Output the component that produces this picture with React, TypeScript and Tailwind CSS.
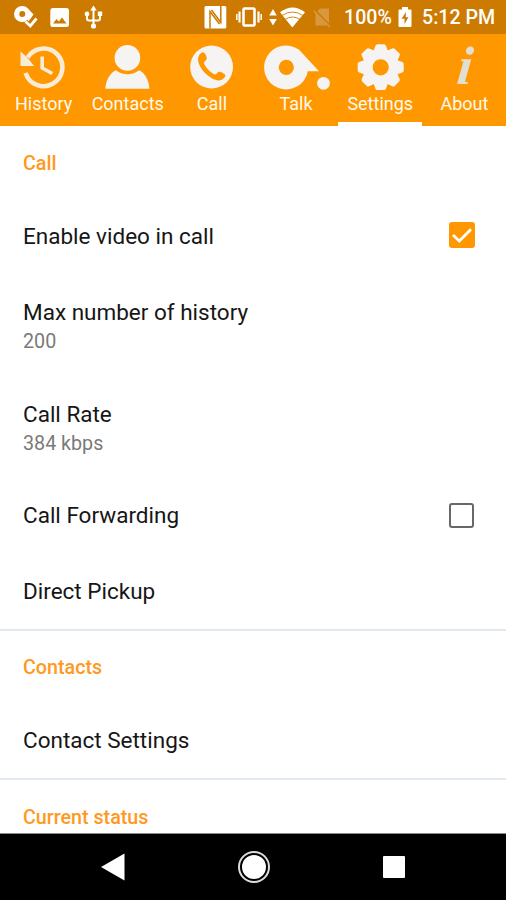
import type { ReactNode } from 'react'

type Tab = {
  label: string
  icon: ReactNode
}

type Pref = {
  title: string
  summary?: string
  checked?: boolean
}

type Section = {
  name: string
  items: Pref[]
}

const tabs: Tab[] = [
  { label: 'History', icon: <HistoryIcon /> },
  { label: 'Contacts', icon: <ContactsIcon /> },
  { label: 'Call', icon: <CallIcon /> },
  { label: 'Talk', icon: <TalkIcon /> },
  { label: 'Settings', icon: <GearIcon /> },
  { label: 'About', icon: <AboutIcon /> },
]

const sections: Section[] = [
  {
    name: 'Call',
    items: [
      { title: 'Enable video in call', checked: true },
      { title: 'Max number of history', summary: '200' },
      { title: 'Call Rate', summary: '384 kbps' },
      { title: 'Call Forwarding', checked: false },
      { title: 'Direct Pickup' },
    ],
  },
  { name: 'Contacts', items: [{ title: 'Contact Settings' }] },
  { name: 'Current status', items: [] },
]

function HistoryIcon() {
  return (
    <svg viewBox="1 0 84 56" className="w-[84px] h-14" fill="none" stroke="#f8ecd8">
      <path d="M25.6 38.8A18.8 18.8 0 1 0 27.6 23.5" strokeWidth="4.6" />
      <path d="M20.5 17.5L25.5 22L29 25.5L34 32H20.5Z" fill="#f8ecd8" stroke="none" />
      <path d="M42.2 22.5V34L52.3 39.5" strokeWidth="3.6" />
    </svg>
  )
}

function ContactsIcon() {
  return (
    <svg viewBox="1 0 84 56" className="w-[84px] h-14" fill="#f5f4f2">
      <circle cx="43.4" cy="23.9" r="12.8" />
      <path d="M21.3 54.7C21.8 46 26.5 38.5 32 36.3C38.5 41.5 48.5 41.5 55 36.3C60.5 38.5 65 46 65.4 54.7Z" />
    </svg>
  )
}

function CallIcon() {
  return (
    <svg viewBox="0 0 84 56" className="w-[84px] h-14">
      <circle cx="42.6" cy="33" r="21.4" fill="#f5f4f2" />
      <path
        transform="translate(25.4 16.2) scale(1.42)"
        d="M4.6 2.1C6.3 0.8 7.2 1.6 8.1 3.6C9 5.6 9 6.6 7.6 7.6C6.4 8.5 6.6 9.2 7.6 11C9 13.3 10.7 15 13 16.4C14.5 17.3 15.3 17.3 16.1 16.1C17 14.9 18 14.9 20 16C22 17 22.4 17.9 21.2 19.3C19 21.9 16 21.8 12.3 19.8C8.6 17.8 5.5 14.5 3.8 11C2.1 7.4 2.1 4 4.6 2.1Z"
        fill="#ff9800"
      />
    </svg>
  )
}

function TalkIcon() {
  return (
    <svg viewBox="1 0 84 56" className="w-[84px] h-14" fill="#f5f4f2">
      <path
        fillRule="evenodd"
        d="M46.1 15.7L66 37.2H54.8A22 22 0 1 1 46.1 15.7ZM33.3 25.7A7.6 7.6 0 1 0 33.3 40.9A7.6 7.6 0 1 0 33.3 25.7Z"
      />
      <circle cx="70.5" cy="49.3" r="6.4" />
    </svg>
  )
}

function GearIcon() {
  const angles = [0, 45, 90, 135, 180, 225, 270, 315]
  return (
    <svg viewBox="0 0 84 56" className="w-[84px] h-14" fill="#f5f4f2">
      <g transform="translate(42.7 33.3)">
        <circle r="13.1" fill="none" stroke="#f5f4f2" strokeWidth="10" />
        {angles.map(a => (
          <path
            key={a}
            transform={`rotate(${a})`}
            d="M-7.5 -15.5L-5.2 -21.5Q-4.6 -23 -3.3 -23H3.3Q4.6 -23 5.2 -21.5L7.5 -15.5Z"
          />
        ))}
      </g>
    </svg>
  )
}

function AboutIcon() {
  return (
    <span className="block h-14 -skew-x-6 pt-[4px] pl-[3px] text-center font-['Liberation_Serif',serif] text-[54px] leading-[56px] font-bold italic text-[#e2dfd2]">
      i
    </span>
  )
}

function StatusBar() {
  return (
    <div className="flex h-[34px] items-center bg-[#cc7a00] font-medium text-white">
      <svg viewBox="0 0 110 34" className="w-[110px] h-[34px]" fill="#fff">
        <path
          fillRule="evenodd"
          d="M22.5 6Q25.5 6 27.5 8L33.5 14.5L28.5 21.5L21.5 22A8 8 0 1 1 22.5 6ZM22.3 11A3 3 0 1 0 22.3 17A3 3 0 1 0 22.3 11Z"
        />
        <path d="M25.5 21.5L30.3 26L36.5 18.5" fill="none" stroke="#cc7a00" strokeWidth="5" />
        <path d="M25.5 21.5L30.3 26L36.5 18.5" fill="none" stroke="#fff" strokeWidth="2.8" />
        <path
          fillRule="evenodd"
          d="M52.5 8H66.5Q69 8 69 10.5V24.5Q69 27 66.5 27H52.5Q50.3 27 50.3 24.5V10.5Q50.3 8 52.5 8ZM53 23.5H66.5L62 17.5L58.8 21.5L56.5 19Z"
        />
        <g fill="none" stroke="#fff" strokeWidth="2">
          <path d="M93.5 9V26M87 15.5V18.5Q87 20.5 89 20.5H98Q100 20.5 100 18.5V15" />
        </g>
        <path d="M93.5 5.5L96.8 10.5H90.2Z" />
        <circle cx="93.5" cy="26" r="2.6" />
        <circle cx="87" cy="14" r="2.4" />
        <path d="M97.8 11.5H102.2V16H97.8Z" />
      </svg>
      <svg viewBox="200 0 140 34" className="ml-[90px] w-[140px] h-[34px]" fill="#fff">
        {/* nfc */}
        <rect x="204.5" y="6" width="21.8" height="22.5" rx="1.5" />
        <path d="M210 28.5V11.5L219.5 24M220.8 6V22.5L211.5 10" fill="none" stroke="#cc7a00" strokeWidth="1.5" />
        {/* vibrate */}
        <rect x="243.5" y="8.5" width="11" height="17" rx="1" fill="none" stroke="#fff" strokeWidth="2.6" />
        <path d="M239.5 11.5V22.5M258.5 11.5V22.5" stroke="#fff" strokeWidth="2.2" />
        <path d="M236.8 14V20M261.2 14V20" stroke="#fff" strokeWidth="1.5" />
        {/* data arrows + wifi */}
        <path d="M273 9L276.8 15.5H269.2ZM273 25.5L276.8 19H269.2Z" />
        <path d="M280 12.3Q292.5 2.5 305 12.3L292.3 27.5Z" />
        <path d="M282 15.5Q292.5 8.5 303 15.5M285 19.5Q292.5 14.5 300 19.5" fill="none" stroke="#cc7a00" strokeWidth="0.9" />
        {/* no sim */}
        <path d="M320 8.5H329V25.5H315.5V13Z" fill="#d9983f" />
        <path d="M314 9.5L331 27" stroke="#cc7a00" strokeWidth="2.5" />
        <path d="M313.5 10.5L330 27" stroke="#d9983f" strokeWidth="1.5" />
      </svg>
      <span className="ml-[4px] w-[49px] whitespace-nowrap pt-px text-[19.6px]">100%</span>
      <svg viewBox="0 0 14 22" className="ml-[5px] w-[14px] h-[22px]">
        <path d="M4 1H10V3.5H12.5Q13.5 3.5 13.5 4.5V20Q13.5 21 12.5 21H1.5Q0.5 21 0.5 20V4.5Q0.5 3.5 1.5 3.5H4Z" fill="#fff" />
        <path d="M8 6L3.5 12.8H6.5V18L10.5 11.3H7.7Z" fill="#cc7a00" />
      </svg>
      <span className="ml-[10px] whitespace-nowrap pt-[2px] text-[19.6px]">5:12 PM</span>
    </div>
  )
}

function Checkbox({ checked }: { checked: boolean }) {
  if (!checked) {
    return <span className="mr-px block size-[25px] rounded-[3px] border-[2.5px] border-[#686868]" />
  }
  return (
    <span className="-mt-px block size-[26px] rounded-[3px] bg-[#ff9800]">
      <svg viewBox="0 0 26 26" className="size-[26px]">
        <path d="M4 13L10.3 19L22 7.3" fill="none" stroke="#fff" strokeWidth="2.7" />
      </svg>
    </span>
  )
}

export default function App() {
  const active = 'Settings'

  return (
    <div className="flex h-[900px] w-[506px] flex-col overflow-hidden bg-white font-[Roboto,sans-serif]">
      <StatusBar />

      <nav className="grid h-[92px] shrink-0 grid-cols-6 bg-[#ff9800] pl-px">
        {tabs.map(tab => (
          <div
            key={tab.label}
            className={`flex flex-col items-center border-b-4 ${tab.label === active ? 'border-white' : 'border-[#ff9800]'}`}
          >
            {tab.icon}
            <span className="pl-px text-[18px] leading-[28px] text-[#fff8ec]">{tab.label}</span>
          </div>
        ))}
      </nav>

      <main className="min-h-0 flex-1 overflow-hidden">
        {sections.map((section, i) => (
          <section key={section.name} className={i > 0 ? 'border-t-2 border-[#e1e8f2]' : ''}>
            <h2 className="flex h-[72px] items-center px-[23px] pt-[3px] text-[19.7px] font-medium text-[#ff9922]">
              {section.name}
            </h2>
            {section.items.map(item => (
              <div
                key={item.title}
                className={`flex items-center justify-between pl-[23px] pr-[31px] ${item.summary ? 'h-[102px] pt-[2px]' : 'h-[75.5px]'}`}
              >
                <div>
                  <div className="text-[22.5px] leading-[30px] text-[#161616]">{item.title}</div>
                  {item.summary && (
                    <div className="mt-px text-[19.7px] leading-[27px] text-[#7a7a7a]">{item.summary}</div>
                  )}
                </div>
                {item.checked !== undefined && <Checkbox checked={item.checked} />}
              </div>
            ))}
          </section>
        ))}
      </main>

      {/* Android navigation buttons */}
      <footer className="flex h-[67px] shrink-0 items-center justify-between border-t border-[#8a8a8a] bg-black pl-[100px] pr-[101px]">
        <svg viewBox="0 0 26 30" className="w-[26px] h-[30px]">
          <path d="M1 15L24.5 1.5V28.5Z" fill="#fff" />
        </svg>
        <svg viewBox="0 0 34 34" className="-ml-[2px] size-[34px]">
          <circle cx="17" cy="17" r="15" fill="none" stroke="#ddd" strokeWidth="2" />
          <circle cx="17" cy="17" r="12" fill="#fff" />
        </svg>
        <span className="size-[22px] rounded-[1px] bg-white" />
      </footer>
    </div>
  )
}
